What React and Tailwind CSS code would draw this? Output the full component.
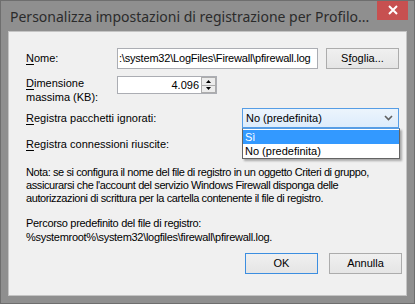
import React from 'react'

const UI = "font-['Liberation_Sans',Arial,sans-serif] text-[11px] text-black"

function U({ children }) {
  return <span className="underline underline-offset-[2px]">{children}</span>
}

function Button({ children, primary }) {
  return (
    <div
      className={`w-[73px] h-[21px] flex items-center justify-center border bg-gradient-to-b from-[#f0f0f0] to-[#e5e5e5] ${
        primary ? 'border-[#3c8ee0]' : 'border-[#acacac]'
      }`}
    >
      {children}
    </div>
  )
}

function Combo({ children }) {
  return (
    <div className="w-[157px] h-[20px] border border-[#569de5] bg-gradient-to-b from-[#ecf4fc] to-[#dcecfc] flex items-center pl-[3px] pr-[5px]">
      <span className="flex-1">{children}</span>
      <svg width="9" height="6" viewBox="0 0 9 6">
        <path d="M1 1 L4.5 4.5 L8 1" fill="none" stroke="#606060" strokeWidth="1.6" />
      </svg>
    </div>
  )
}

export default function App() {
  return (
    <div className="w-[415px] h-[304px] bg-[#8f8f8f] border border-[#6e6e6e] flex flex-col overflow-hidden">
      <div className="h-[30px] flex items-start shrink-0">
        <span className="flex-1 pl-[9px] pt-[6px] text-[14px] leading-[20px] text-[#2b2b2b] font-['Noto_Sans',sans-serif] whitespace-nowrap">
          Personalizza impostazioni di registrazione per Profilo...
        </span>
        <div className="w-[31px] h-[20px] mr-[6px] -mt-px bg-[#c75050] flex items-center justify-center shrink-0">
          <svg width="10" height="10" viewBox="0 0 10 10">
            <path d="M1 1 L9 9 M9 1 L1 9" stroke="#fff" strokeWidth="2" />
          </svg>
        </div>
      </div>

      <div className={`flex-1 mx-[7px] mb-[7px] bg-[#f0f0f0] border border-[#c4c4c4] flex flex-col pl-[17px] pr-[4px] pt-[15px] ${UI}`}>
        {/* Nome */}
        <div className="h-[22px] flex items-center">
          <span className="w-[91px]"><U>N</U>ome:</span>
          <div className="w-[201px] h-[21px] bg-white border border-[#abadb3] flex items-center pl-[1px] overflow-hidden whitespace-nowrap tracking-[-0.2px]">
            :\system32\LogFiles\Firewall\pfirewall.log
          </div>
          <div className="ml-[8px]">
            <Button>S<U>f</U>oglia...</Button>
          </div>
        </div>

        {/* Dimensione */}
        <div className="mt-[7px] h-[28px] flex items-start">
          <span className="w-[91px] leading-[14px]"><U>D</U>imensione<br />massima (KB):</span>
          <div className="w-[100px] h-[18px] bg-white border border-[#abadb3] flex">
            <span className="flex-1 text-right pr-[2px] leading-[16px]">4.096</span>
            <div className="w-[15px] flex flex-col">
              <div className="flex-1 border border-[#acacac] bg-[#ececec] flex items-center justify-center">
                <svg width="5" height="3" viewBox="0 0 5 3"><path d="M2.5 0 L5 3 L0 3Z" fill="#000" /></svg>
              </div>
              <div className="flex-1 border border-t-0 border-[#acacac] bg-[#ececec] flex items-center justify-center">
                <svg width="5" height="3" viewBox="0 0 5 3"><path d="M0 0 L5 0 L2.5 3Z" fill="#000" /></svg>
              </div>
            </div>
          </div>
        </div>

        {/* Registra pacchetti ignorati, with its open list */}
        <div className="mt-[4px] h-[20px] flex items-center">
          <span className="w-[216px]"><U>R</U>egistra pacchetti ignorati:</span>
          <div className="relative z-10">
            <Combo>No (predefinita)</Combo>
            <div className="absolute left-0 top-full w-[158px] bg-white border border-[#646464] border-t-[#569de5] shadow-[2px_2px_2px_rgba(0,0,0,0.3)] pt-px">
              <div className="h-[14px] leading-[14px] pl-[2px] bg-[#3399ff] text-white">Sì</div>
              <div className="h-[14px] leading-[14px] pl-[2px]">No (predefinita)</div>
            </div>
          </div>
        </div>

        {/* Registra connessioni riuscite (its combo is hidden under the open list) */}
        <div className="mt-[6px] h-[20px] flex items-center">
          <span><U>R</U>egistra connessioni riuscite:</span>
        </div>

        <p className="mt-[12px] leading-[13px] whitespace-nowrap tracking-[-0.4px]">
          Nota: se si configura il nome del file di registro in un oggetto Criteri di gruppo,<br />
          assicurarsi che l'account del servizio Windows Firewall disponga delle<br />
          autorizzazioni di scrittura per la cartella contenente il file di registro.
        </p>

        <p className="mt-[11px] leading-[14px] whitespace-nowrap tracking-[-0.3px]">
          Percorso predefinito del file di registro:<br />
          %systemroot%\system32\logfiles\firewall\pfirewall.log.
        </p>

        <div className="mt-[9px] flex justify-end gap-[11px]">
          <Button primary>OK</Button>
          <Button>Annulla</Button>
        </div>
      </div>
    </div>
  )
}
